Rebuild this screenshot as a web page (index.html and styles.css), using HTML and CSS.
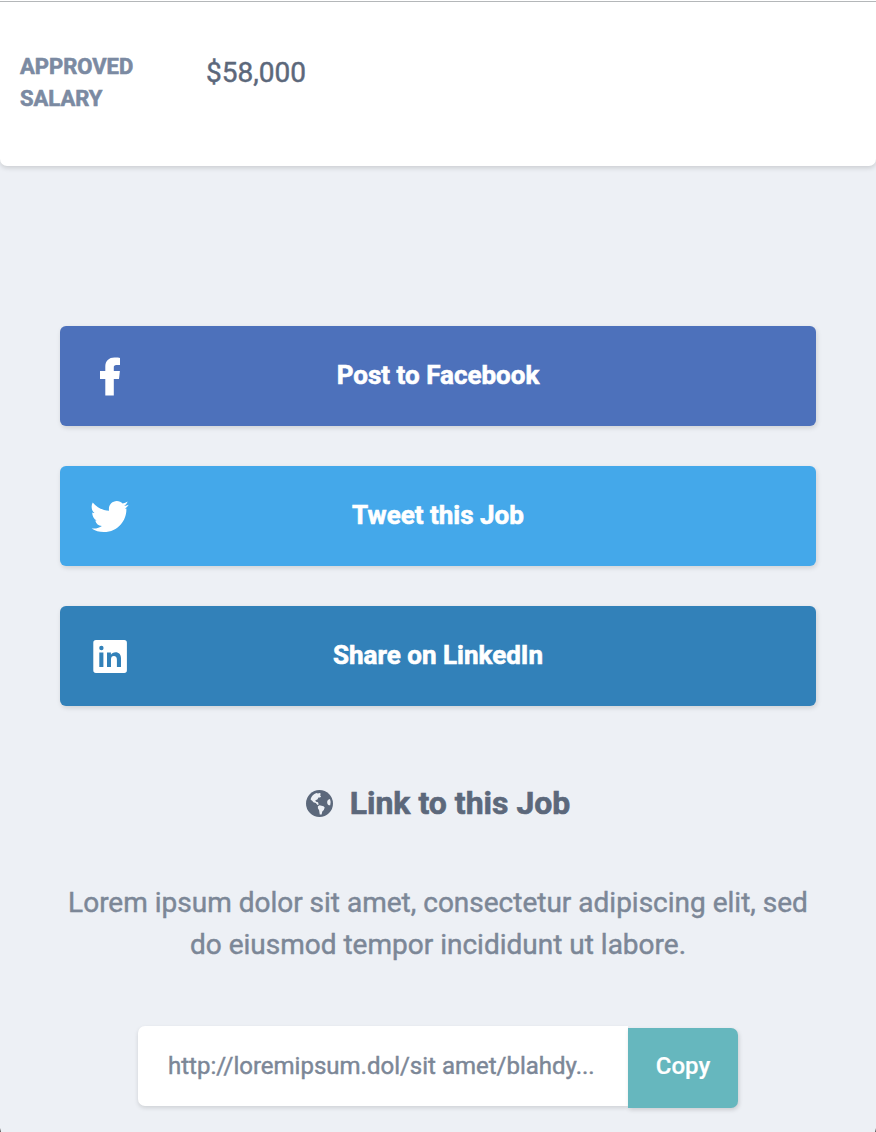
FILE: index.html
```html
<!DOCTYPE html>
<html lang="en">
<head>
<meta charset="utf-8">
<title>Share this Job</title>
<link rel="stylesheet" href="styles.css">
</head>
<body>
<section class="card">
  <h2 class="card-label">Approved Salary</h2>
  <p class="card-value">$58,000</p>
</section>
<main class="share">
  <button class="share-btn facebook">
    <svg class="icon" viewBox="0 0 40 40"><path d="M30 1.900V9.100H26.300C24.500 9.100 23.800 10 23.800 11.400V15H29.900L29 23H23.800V39.400H15.300V23H10V15H15.300V10.800C15.300 4.900 18.900 1.500 24.500 1.500C27 1.500 29 1.700 30 1.900z"/></svg>
    <span class="share-text post">Post to Facebook</span>
  </button>
  <button class="share-btn twitter">
    <svg class="icon" viewBox="0 0 40 40"><path transform="translate(1.6 .9) scale(.0757)" d="M459.37 151.716c.325 4.548.325 9.097.325 13.645 0 138.72-105.583 298.558-298.558 298.558-59.452 0-114.68-17.219-161.137-47.106 8.447.974 16.568 1.299 25.34 1.299 49.055 0 84.213-16.568 110.274-34.832-46.132-.975-74.792-31.188-88.112-72.772 4.498.974 12.995 1.624 19.818 1.624-38.081-19.747-59.529-60.980-59.529-106.271 10 5 21 7 30.431 7.319-28.264-18.843-37.781-51.005-37.781-87.391 0-19.492 5.197-37.360 14.294-52.954 51.655 63.675 129.3 105.258 216.365 109.807-1.624-7.797-2.599-15.918-2.599-24.04 0-57.828 46.782-104.934 104.934-104.934 30.213 0 57.502 12.67 76.670 33.137 23.715-4.548 46.456-13.32 66.599-25.34-7.798 24.366-24.366 44.833-46.132 57.827 21.117-2.273 41.584-8.122 60.426-16.243-14.292 20.791-32.161 39.308-52.628 54.253z"/></svg>
    <span class="share-text tweet">Tweet this Job</span>
  </button>
  <button class="share-btn linkedin">
    <svg class="icon" viewBox="0 0 40 40"><path fill-rule="evenodd" d="M6 4H34.200a2.700 2.700 0 0 1 2.700 2.700V34.200a2.700 2.700 0 0 1-2.700 2.700H6a2.700 2.700 0 0 1-2.700-2.700V6.700A2.700 2.700 0 0 1 6 4zM11.400 9.800a2.200 2.200 0 1 0 0 4.400a2.200 2.200 0 0 0 0-4.400zM9.300 16.500V31.100H13.400V16.500zM17 16.500V31.100H21V23.500C21 21.100 22 20 23.900 20S26.900 21.200 26.900 23.800V31.100H31V22.600C31 18.500 28.900 16.300 25.600 16.300C23.400 16.300 21.700 17.200 20.900 18.700V16.500z"/></svg>
    <span class="share-text linked">Share on LinkedIn</span>
  </button>
  <h3 class="link-title">
    <svg class="globe" viewBox="0 0 27 27"><circle class="globe-sea" cx="13.500" cy="13.500" r="13.500"/><path class="globe-land" d="M4.700 9.800C5 6.500 7.600 3.800 10.500 3L12 3.500L13.600 2.900L14.800 3.700L14.100 5.200L15.100 6.400L14 7.600L12.400 7.500L11.600 9.300L9.200 10.500L10.100 11.800L12 12.200L12.700 14.400L11.500 15L9.800 13L7.400 12.200L6.200 10.700zM11.900 16.200L13.600 15.200L17.500 16.300L18.700 17.600L17.800 20L16.300 21.600L15.600 24.500L13.800 24.500L13.100 20.300L11.900 18.300zM24 9C22 9.300 20.900 11 21.200 12.700C21.400 14.500 22.600 15.400 24.200 15.300Q25.200 12 24 9z"/></svg>
    <span class="link-text">Link to this Job</span>
  </h3>
  <p class="link-copy"><span class="line-one">Lorem ipsum dolor sit amet, consectetur adipiscing elit, sed</span> <span class="line-two">do eiusmod tempor incididunt ut labore.</span></p>
  <div class="link-row">
    <div class="link-url"><span class="url-text">http://loremipsum.dol/sit amet/blahdy...</span></div>
    <button class="copy-btn"><span class="copy-text">Copy</span></button>
  </div>
</main>
</body>
</html>
```
FILE: styles.css
```css
* { box-sizing: border-box; }
body {
  margin: 0;
  height: 1132px;
  overflow: hidden;
  background:
    linear-gradient(transparent, #555) 0 100% / 1px 4px no-repeat,
    linear-gradient(transparent, #555) 100% 100% / 1px 4px no-repeat,
    #edf0f5;
  font-family: Roboto, "Liberation Sans", sans-serif;
  -webkit-text-stroke: .45px currentColor;
}
h2, h3, p { margin: 0; }
button { border: 0; padding: 0; font: inherit; color: #fff; -webkit-text-stroke: .6px currentColor; }
.card {
  display: flex;
  height: 166px;
  padding: 51px 20px 0;
  background: linear-gradient(#b4b7b9 0 1px, transparent 1px) 0 1px no-repeat, #fff;
  border-radius: 0 0 7px 7px;
  box-shadow: 0 2px 5px rgba(0, 0, 0, .15);
}
.card-label {
  width: 186px;
  padding-right: 60px;
  color: #7b8aa2;
  font-size: 22px;
  line-height: 32px;
  font-weight: 700;
  text-transform: uppercase;
  -webkit-text-stroke-width: .6px;
}
.card-value {
  margin-top: 1px;
  color: #5c687b;
  font-size: 28px;
  line-height: 42px;
}
.share {
  display: flex;
  flex-direction: column;
  align-items: center;
  padding: 160px 60px 0;
}
.share-btn {
  display: grid;
  grid-template-columns: 40px 1fr 40px;
  align-items: center;
  width: 756px;
  height: 100px;
  padding: 0 30px;
  margin-bottom: 40px;
  border-radius: 6px;
  box-shadow: 1px 2px 5px rgba(0, 0, 0, .13);
  font-size: 26px;
  line-height: 40px;
  font-weight: 700;
}
.facebook { background: #4d71bb; }
.twitter { background: #44a8ea; }
.linkedin { background: #3281b9; }
.icon { width: 40px; height: 40px; fill: #fff; }
.share-text { margin-top: -2px; justify-self: center; white-space: nowrap; }
.link-title {
  display: flex;
  align-items: center;
  gap: 17px;
  height: 48px;
  margin-top: 33px;
  color: #5c687b;
  font-size: 32px;
  line-height: 48px;
  font-weight: 700;
  -webkit-text-stroke-width: .6px;
}
.globe { width: 27px; height: 27px; }
.globe-sea { fill: #5c687b; }
.globe-land { fill: #edf0f5; }
.link-copy {
  margin-top: 55px;
  color: #7c8797;
  font-size: 28px;
  line-height: 42px;
  text-align: center;
  white-space: nowrap;
}
.line-one, .line-two { display: block; }
.link-row { display: flex; width: 600px; margin-top: 60px; }
.link-url {
  width: 490px;
  height: 80px;
  padding-left: 30px;
  background: #fff;
  border-radius: 7px 0 0 7px;
  box-shadow: 0 2px 4px rgba(0, 0, 0, .13);
  color: #7c8797;
  font-size: 24px;
  line-height: 80px;
  white-space: nowrap;
}
.copy-btn {
  width: 110px;
  height: 80px;
  margin-top: 2px;
  padding-bottom: 4px;
  background: #66b7be;
  border-radius: 0 7px 7px 0;
  box-shadow: 1px 2px 4px rgba(0, 0, 0, .15);
  font-size: 24px;
  font-weight: 500;
  -webkit-text-stroke: .2px currentColor;
}
```
